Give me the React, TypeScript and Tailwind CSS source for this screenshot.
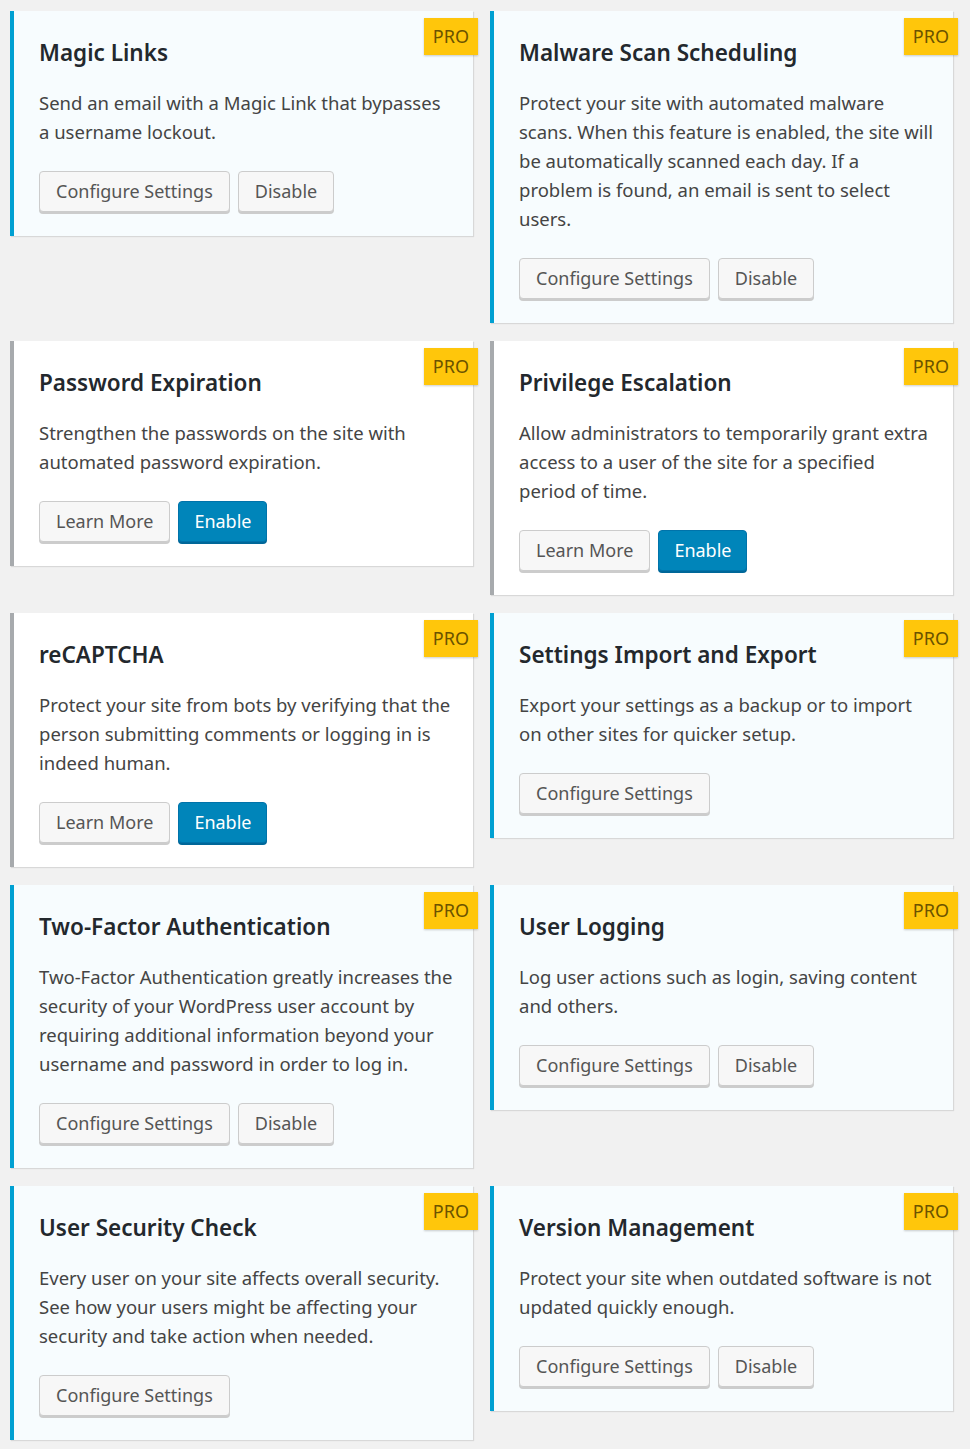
import React from "react"

type Action = "configure" | "disable" | "learn" | "enable"

interface Feature {
  title: string
  description: string
  active: boolean
  actions: Action[]
}

const features: Feature[] = [
  {
    title: "Magic Links",
    description: "Send an email with a Magic Link that bypasses a username lockout.",
    active: true,
    actions: ["configure", "disable"],
  },
  {
    title: "Malware Scan Scheduling",
    description:
      "Protect your site with automated malware scans. When this feature is enabled, the site will be automatically scanned each day. If a problem is found, an email is sent to select users.",
    active: true,
    actions: ["configure", "disable"],
  },
  {
    title: "Password Expiration",
    description: "Strengthen the passwords on the site with automated password expiration.",
    active: false,
    actions: ["learn", "enable"],
  },
  {
    title: "Privilege Escalation",
    description:
      "Allow administrators to temporarily grant extra access to a user of the site for a specified period of time.",
    active: false,
    actions: ["learn", "enable"],
  },
  {
    title: "reCAPTCHA",
    description:
      "Protect your site from bots by verifying that the person submitting comments or logging in is indeed human.",
    active: false,
    actions: ["learn", "enable"],
  },
  {
    title: "Settings Import and Export",
    description: "Export your settings as a backup or to import on other sites for quicker setup.",
    active: true,
    actions: ["configure"],
  },
  {
    title: "Two-Factor Authentication",
    description:
      "Two-Factor Authentication greatly increases the security of your WordPress user account by requiring additional information beyond your username and password in order to log in.",
    active: true,
    actions: ["configure", "disable"],
  },
  {
    title: "User Logging",
    description: "Log user actions such as login, saving content and others.",
    active: true,
    actions: ["configure", "disable"],
  },
  {
    title: "User Security Check",
    description:
      "Every user on your site affects overall security. See how your users might be affecting your security and take action when needed.",
    active: true,
    actions: ["configure"],
  },
  {
    title: "Version Management",
    description: "Protect your site when outdated software is not updated quickly enough.",
    active: true,
    actions: ["configure", "disable"],
  },
]

const labels: Record<Action, string> = {
  configure: "Configure Settings",
  disable: "Disable",
  learn: "Learn More",
  enable: "Enable",
}

function ActionButton({ action }: { action: Action }) {
  if (action === "enable") {
    return (
      <button className="h-[41px] px-[15px] rounded-[4px] border border-[#0073aa] bg-[#0085ba] text-white shadow-[0_2px_0_#006799] text-[18px]">
        {labels[action]}
      </button>
    )
  }
  return (
    <button className="h-[41px] px-[16px] rounded-[4px] border border-[#cccccc] bg-[#f7f7f7] text-[#555555] shadow-[0_2px_0_#cccccc] text-[18px]">
      {labels[action]}
    </button>
  )
}

function FeatureCard({ feature }: { feature: Feature }) {
  return (
    <div
      className={
        "relative border-l-4 pt-[26px] pb-[24px] pl-[25px] pr-[19px] shadow-[1px_1px_1px_rgba(0,0,0,0.1)] " +
        (feature.active ? "border-[#00a0d2] bg-[#f7fcfe]" : "border-[#a7aaad] bg-white")
      }
    >
      <span className="absolute top-[7px] right-[-5px] h-[37px] px-[9px] flex items-center bg-[#ffc60b] text-[#6b5300] text-[18px] shadow-[0_1px_2px_rgba(0,0,0,0.2)]">
        PRO
      </span>
      <h3 className="text-[22.5px] leading-[32px] font-semibold text-[#23282d]">{feature.title}</h3>
      <p className="mt-[19px] text-[18.5px] leading-[29px] text-[#444444]">{feature.description}</p>
      <div className="mt-[25px] flex gap-[8px]">
        {feature.actions.map((a) => (
          <ActionButton key={a} action={a} />
        ))}
      </div>
    </div>
  )
}

function App() {
  return (
    <div
      className="min-h-[1449px] bg-[#f1f1f1] pt-[11px] pl-[10px]"
      style={{ fontFamily: '"Noto Sans", "Open Sans", sans-serif' }}
    >
      <div className="grid grid-cols-[463px_463px] gap-x-[17px] gap-y-[18px] items-start">
        {features.map((f) => (
          <FeatureCard key={f.title} feature={f} />
        ))}
      </div>
    </div>
  )
}

export default App
